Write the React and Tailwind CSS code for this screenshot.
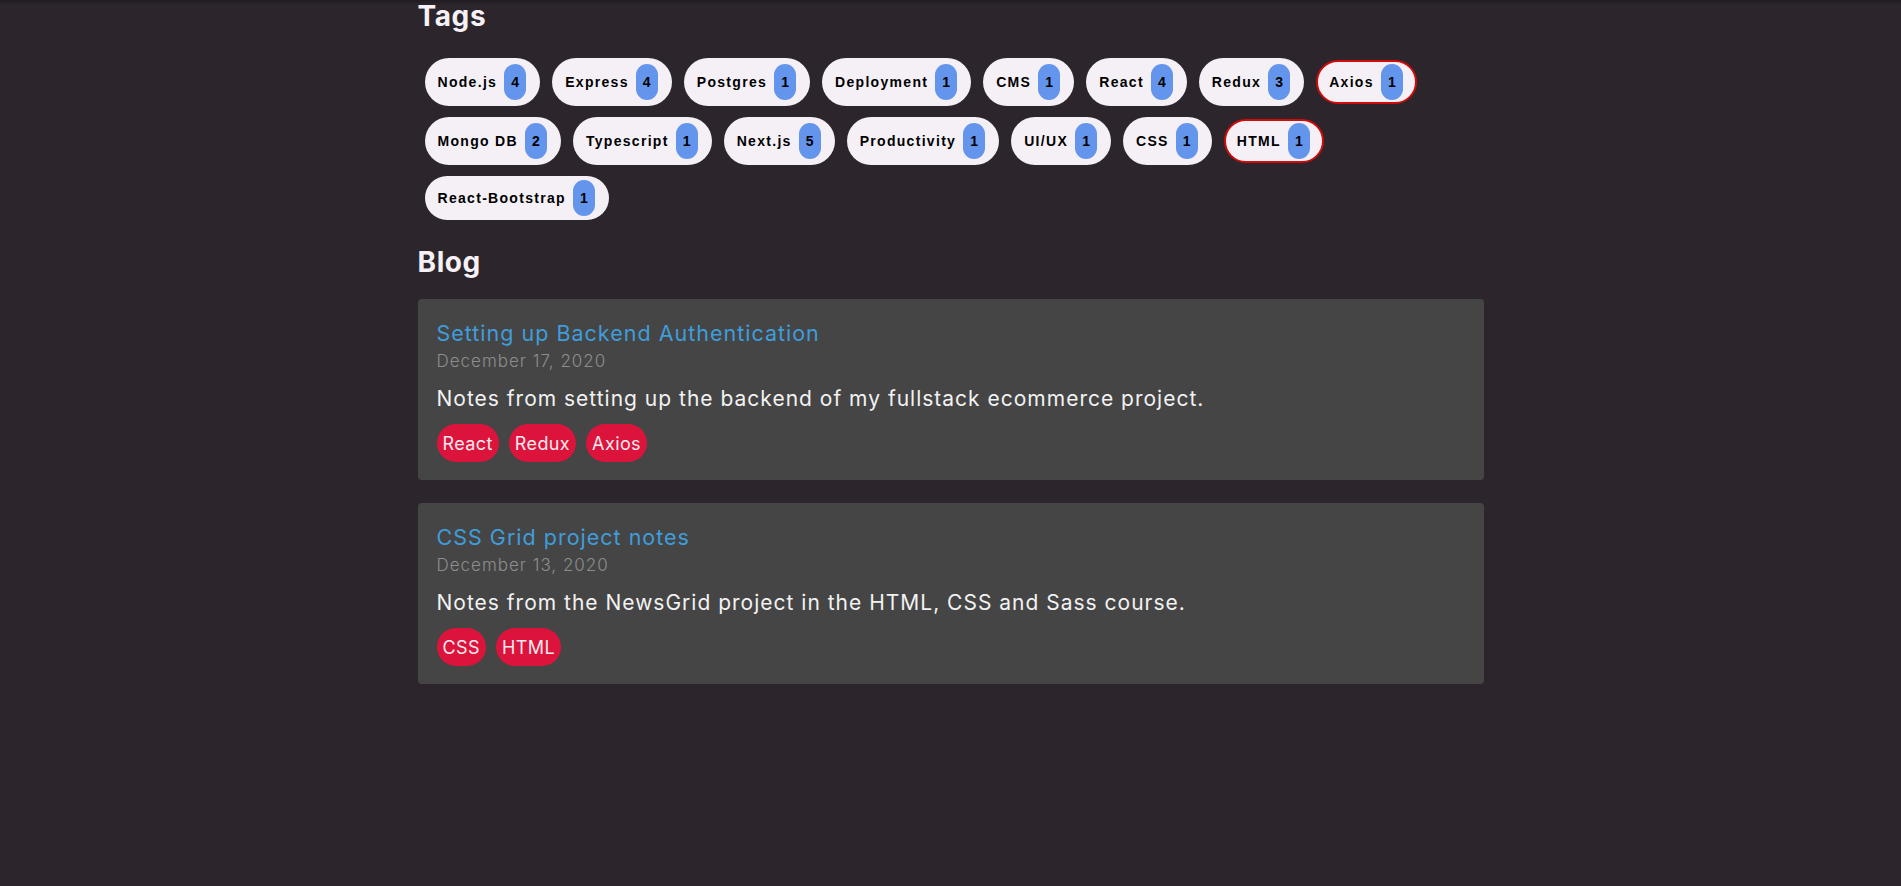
const tags = [
  { name: "Node.js", count: 4 },
  { name: "Express", count: 4 },
  { name: "Postgres", count: 1 },
  { name: "Deployment", count: 1 },
  { name: "CMS", count: 1 },
  { name: "React", count: 4 },
  { name: "Redux", count: 3 },
  { name: "Axios", count: 1, active: true },
  { name: "Mongo DB", count: 2 },
  { name: "Typescript", count: 1 },
  { name: "Next.js", count: 5 },
  { name: "Productivity", count: 1 },
  { name: "UI/UX", count: 1 },
  { name: "CSS", count: 1 },
  { name: "HTML", count: 1, active: true },
  { name: "React-Bootstrap", count: 1 },
];

const posts = [
  {
    title: "Setting up Backend Authentication",
    date: "December 17, 2020",
    excerpt: "Notes from setting up the backend of my fullstack ecommerce project.",
    tags: ["React", "Redux", "Axios"],
  },
  {
    title: "CSS Grid project notes",
    date: "December 13, 2020",
    excerpt: "Notes from the NewsGrid project in the HTML, CSS and Sass course.",
    tags: ["CSS", "HTML"],
  },
];

function TagPill({ name, count, active }) {
  return (
    <a
      href="#"
      className={`flex items-center gap-[7px] rounded-full bg-[#f4f0f6] text-[14px] font-bold tracking-[1.3px] text-black ${
        active ? "my-[2px] h-[44px] border-2 border-[#d10a0a] pl-[11px] pr-[12px]" : "py-[4px] pl-[13px] pr-[14px]"
      }`}
      style={{ fontFamily: '"Liberation Sans", Arial, sans-serif' }}
    >
      <span>{name}</span>
      <span className="flex h-[36px] w-[22px] items-center justify-center rounded-full bg-[#6495ed] text-[14px] tracking-normal">
        {count}
      </span>
    </a>
  );
}

function PostCard({ post }) {
  return (
    <article className="rounded-[4px] bg-[#454545] p-[18px] pl-[19px]">
      <a href="#" className="mt-[2px] block text-[21.5px] leading-[28px] tracking-[1px] text-[#3f9ddb]">
        {post.title}
      </a>
      <p className="mt-[2px] text-[17px] font-light leading-[24px] tracking-[1px] text-[#8d8d8d]">{post.date}</p>
      <p className="mt-3 text-[21px] leading-[28px] tracking-[1px] text-[#f2f2f2]">{post.excerpt}</p>
      <div className="mt-[11px] flex gap-[10px]">
        {post.tags.map((t) => (
          <span
            key={t}
            className="flex h-[38px] items-center rounded-full bg-[#dc143c] px-[6px] text-[18px] tracking-[0.4px] text-[#fbe9ee]"
          >
            {t}
          </span>
        ))}
      </div>
    </article>
  );
}

export default function App() {
  return (
    <div
      className="min-h-screen bg-[linear-gradient(to_bottom,#201b20,#2c262c_5px)] text-white"
      style={{ fontFamily: 'Inter, "Noto Sans", sans-serif' }}
    >
      <main className="mx-auto w-[1066px]">
        <h2 className="text-[28px] font-bold leading-[32px] tracking-[0.6px] text-[#f6f1f6]">Tags</h2>
        <div className="mt-[26px] flex flex-wrap gap-x-[12px] gap-y-[11px] pl-[7px]">
          {tags.map((t) => (
            <TagPill key={t.name} {...t} />
          ))}
        </div>

        <h2 className="mt-[26px] text-[28px] font-bold leading-[32px] tracking-[0.6px] text-[#f6f1f6]">Blog</h2>
        <div className="mt-[21px] flex flex-col gap-[23px]">
          {posts.map((p) => (
            <PostCard key={p.title} post={p} />
          ))}
        </div>
      </main>
    </div>
  );
}
